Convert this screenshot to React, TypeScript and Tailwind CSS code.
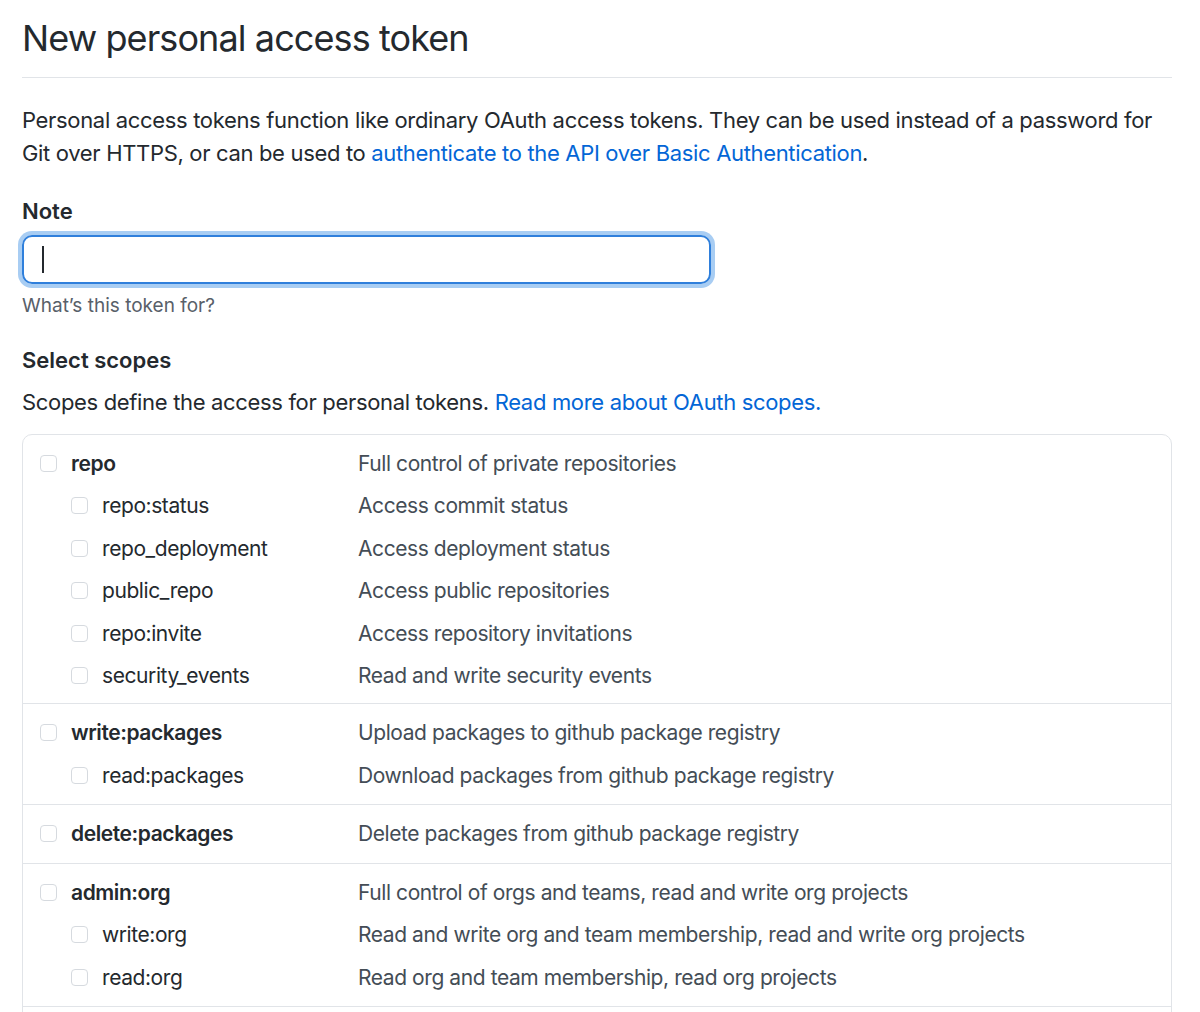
import React from 'react'

type Scope = { name: string; desc: string; children?: { name: string; desc: string }[] }

const groups: Scope[] = [
  {
    name: 'repo',
    desc: 'Full control of private repositories',
    children: [
      { name: 'repo:status', desc: 'Access commit status' },
      { name: 'repo_deployment', desc: 'Access deployment status' },
      { name: 'public_repo', desc: 'Access public repositories' },
      { name: 'repo:invite', desc: 'Access repository invitations' },
      { name: 'security_events', desc: 'Read and write security events' },
    ],
  },
  {
    name: 'write:packages',
    desc: 'Upload packages to github package registry',
    children: [{ name: 'read:packages', desc: 'Download packages from github package registry' }],
  },
  { name: 'delete:packages', desc: 'Delete packages from github package registry' },
  {
    name: 'admin:org',
    desc: 'Full control of orgs and teams, read and write org projects',
    children: [
      { name: 'write:org', desc: 'Read and write org and team membership, read and write org projects' },
      { name: 'read:org', desc: 'Read org and team membership, read org projects' },
    ],
  },
  {
    name: 'admin:public_key',
    desc: 'Full control of user public keys',
    children: [
      { name: 'write:public_key', desc: 'Write user public keys' },
      { name: 'read:public_key', desc: 'Read user public keys' },
    ],
  },
]

function Box() {
  return <span className="block w-[17px] h-[17px] rounded-[4px] border border-[#d6dadf] bg-white shrink-0" />
}

export default function App() {
  return (
    <div className="h-screen bg-white text-[#24292e] font-['Inter','Liberation_Sans',sans-serif] pl-[22px] pr-[28px] pt-[14px] overflow-hidden">
      {/* Header */}
      <h1 className="text-[36px] leading-[48px] tracking-[-0.025em] font-normal pb-[15px] border-b border-[#e1e4e8]">
        New personal access token
      </h1>

      <p className="mt-[26px] text-[22px] leading-[33px] tracking-[-0.015em]">
        Personal access tokens function like ordinary OAuth access tokens. They can be used instead of a password for
        Git over HTTPS, or can be used to{' '}
        <a className="text-[#0366d6]">authenticate to the API over Basic Authentication</a>.
      </p>

      {/* Note */}
      <div className="mt-[25px] text-[22px] leading-[33px] font-semibold">Note</div>
      <div className="mt-[7px] w-[689px] h-[49px] rounded-[10px] border-2 border-[#2f7fdb] ring-4 ring-[#a8cdf3] flex items-center pl-[18px]">
        <span className="block w-[2px] h-[27px] bg-[#24292e]" />
      </div>
      <div className="mt-[8px] text-[19px] leading-[28px] text-[#586069]">What’s this token for?</div>

      {/* Scopes */}
      <div className="mt-[24px] text-[22px] leading-[33px] font-semibold">Select scopes</div>
      <p className="mt-[9px] text-[22px] leading-[33px] tracking-[-0.015em]">
        Scopes define the access for personal tokens.{' '}
        <a className="text-[#0366d6]">Read more about OAuth scopes.</a>
      </p>

      <div className="mt-[15px] border border-[#e1e4e8] rounded-[10px]">
        {groups.map((g, i) => (
          <div key={g.name} className={i > 0 ? 'py-[7.5px] border-t border-[#e1e4e8]' : 'pt-[7px] pb-[6px]'}>
            <div className="flex items-center h-[42.5px] text-[21px] tracking-[-0.02em]">
              <div className="w-[335px] flex items-center gap-[14px] pl-[17px]">
                <Box />
                <span className="font-semibold">{g.name}</span>
              </div>
              <span className="text-[#444d56]">{g.desc}</span>
            </div>
            {g.children?.map((c) => (
              <div key={c.name} className="flex items-center h-[42.5px] text-[21px] tracking-[-0.02em]">
                <div className="w-[335px] flex items-center gap-[14px] pl-[48px]">
                  <Box />
                  <span>{c.name}</span>
                </div>
                <span className="text-[#444d56]">{c.desc}</span>
              </div>
            ))}
          </div>
        ))}
      </div>
    </div>
  )
}
